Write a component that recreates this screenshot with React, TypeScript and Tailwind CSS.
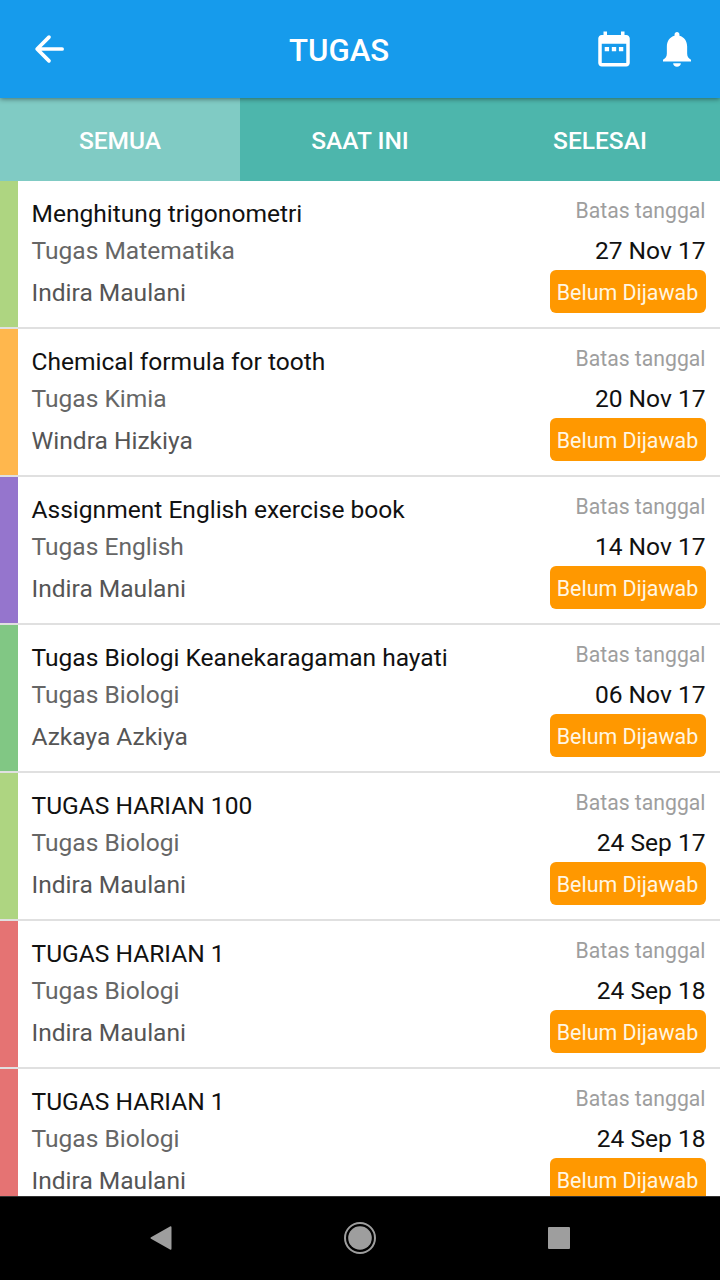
const tasks = [
  { title: 'Menghitung trigonometri', subject: 'Tugas Matematika', teacher: 'Indira Maulani', due: '27 Nov 17', bar: 'bg-[#aed581]' },
  { title: 'Chemical formula for tooth', subject: 'Tugas Kimia', teacher: 'Windra Hizkiya', due: '20 Nov 17', bar: 'bg-[#ffb74d]' },
  { title: 'Assignment English exercise book', subject: 'Tugas English', teacher: 'Indira Maulani', due: '14 Nov 17', bar: 'bg-[#9575cd]' },
  { title: 'Tugas Biologi Keanekaragaman hayati', subject: 'Tugas Biologi', teacher: 'Azkaya Azkiya', due: '06 Nov 17', bar: 'bg-[#81c784]' },
  { title: 'TUGAS HARIAN 100', subject: 'Tugas Biologi', teacher: 'Indira Maulani', due: '24 Sep 17', bar: 'bg-[#aed581]' },
  { title: 'TUGAS HARIAN 1', subject: 'Tugas Biologi', teacher: 'Indira Maulani', due: '24 Sep 18', bar: 'bg-[#e57373]' },
  { title: 'TUGAS HARIAN 1', subject: 'Tugas Biologi', teacher: 'Indira Maulani', due: '24 Sep 18', bar: 'bg-[#e57373]' },
];

type Task = (typeof tasks)[number];

function Header() {
  return (
    <header className="z-10 flex h-[98px] shrink-0 items-center bg-[#169bec] pr-[22px] pl-[28px] text-white shadow-[0_1px_5px_rgba(0,0,0,0.45)]">
      <svg className="size-[42px]" viewBox="0 0 24 24" fill="none" stroke="currentColor" strokeWidth="2.1" strokeLinecap="round">
        <path d="M19.5 12H5.5M12 5.2 5.2 12l6.8 6.8" strokeLinejoin="round" />
      </svg>
      <h1 className="ml-[219px] flex-1 pt-[4px] text-[31.2px] leading-[38px] font-medium">TUGAS</h1>
      <svg className="size-[42px]" viewBox="0 0 24 24" fill="currentColor">
        <path d="M9.2 10.9H6.7v2.4h2.5v-2.4zm4.05 0h-2.5v2.4h2.5v-2.4zm4.05 0h-2.5v2.4h2.5v-2.4zM19 4h-1V2h-2v2H8V2H6v2H5c-1.11 0-1.99.9-1.99 2L3 20c0 1.1.89 2 2 2h14c1.1 0 2-.9 2-2V6c0-1.1-.9-2-2-2zm0 16H5V9h14v11z" />
      </svg>
      <svg className="ml-[21px] size-[42px]" viewBox="0 0 24 24" fill="currentColor">
        <path d="M12 22.2c1.2 0 2.2-.8 2.2-2H9.8c0 1.2 1 2 2.2 2zM17.8 14.5V10.5c0-3-1.7-5.4-4.4-6.1V3.7c0-.8-.6-1.4-1.4-1.4s-1.4.6-1.4 1.4v.7C7.9 5.1 6.2 7.5 6.2 10.5v4c0 1.8-.7 2.7-2.2 3.6v1.1h16v-1.1c-1.5-.9-2.2-1.8-2.2-3.6z" />
      </svg>
    </header>
  );
}

function Tabs() {
  return (
    <nav className="grid h-[83px] shrink-0 grid-cols-3 bg-[#4db6ac] text-[24.5px] font-medium text-white">
      <button className="bg-[#80cbc4] pt-[3px]">SEMUA</button>
      <button className="pt-[3px]">SAAT INI</button>
      <button className="pt-[3px]">SELESAI</button>
    </nav>
  );
}

function TaskRow({ task }: { task: Task }) {
  return (
    <li className="flex h-[148px] shrink-0 border-b-2 border-[#e0e0e0] text-[24.55px] leading-[30px]">
      <div className={`w-[17.5px] shrink-0 ${task.bar}`} />
      <div className="flex-1 pt-[18px] pl-[14px] whitespace-nowrap">
        <p className="text-[#111]">{task.title}</p>
        <p className="mt-[7px] text-[#666]">{task.subject}</p>
        <p className="mt-[12px] text-[#555]">{task.teacher}</p>
      </div>
      <div className="flex flex-col items-end pt-[16px] pr-[14.5px] whitespace-nowrap">
        <p className="text-[21.2px] leading-[28px] text-[#9e9e9e]">Batas tanggal</p>
        <p className="mt-[11px] text-[#111]">{task.due}</p>
        <span className="mt-[4px] flex h-[43px] w-[156px] items-center justify-center rounded-[6px] bg-[#ff9800] pt-[2px] text-[21.4px] text-[#fff6e3]">
          Belum Dijawab
        </span>
      </div>
    </li>
  );
}

function NavigationBar() {
  return (
    <footer className="grid h-[84px] shrink-0 grid-cols-[320px_80px_320px] items-center border-t border-[#333] bg-black pb-[2px] text-[#9e9e9e]">
      <svg className="ml-[149px] h-[26px] w-[24px]" viewBox="0 0 24 26" fill="currentColor">
        <path d="M21 1.5Q22.5.7 22.5 2.5v21q0 1.8-1.5 1L2 13.7q-1.3-.7 0-1.4z" />
      </svg>
      <svg className="ml-[22.5px] size-[34px]" viewBox="0 0 34 34">
        <circle cx="17" cy="17" r="15" fill="none" stroke="currentColor" strokeWidth="2" />
        <circle cx="17" cy="17" r="11.8" fill="currentColor" />
      </svg>
      <div className="ml-[147.5px] size-[22px] rounded-[1px] bg-[#9e9e9e]" />
    </footer>
  );
}

export default function App() {
  return (
    <div className="flex h-[1280px] w-[720px] flex-col overflow-hidden bg-white font-[Roboto,sans-serif]">
      <Header />
      <Tabs />
      <ul className="min-h-0 flex-1 overflow-hidden">
        {tasks.map((task, index) => (
          <TaskRow key={index} task={task} />
        ))}
      </ul>
      <NavigationBar />
    </div>
  );
}
